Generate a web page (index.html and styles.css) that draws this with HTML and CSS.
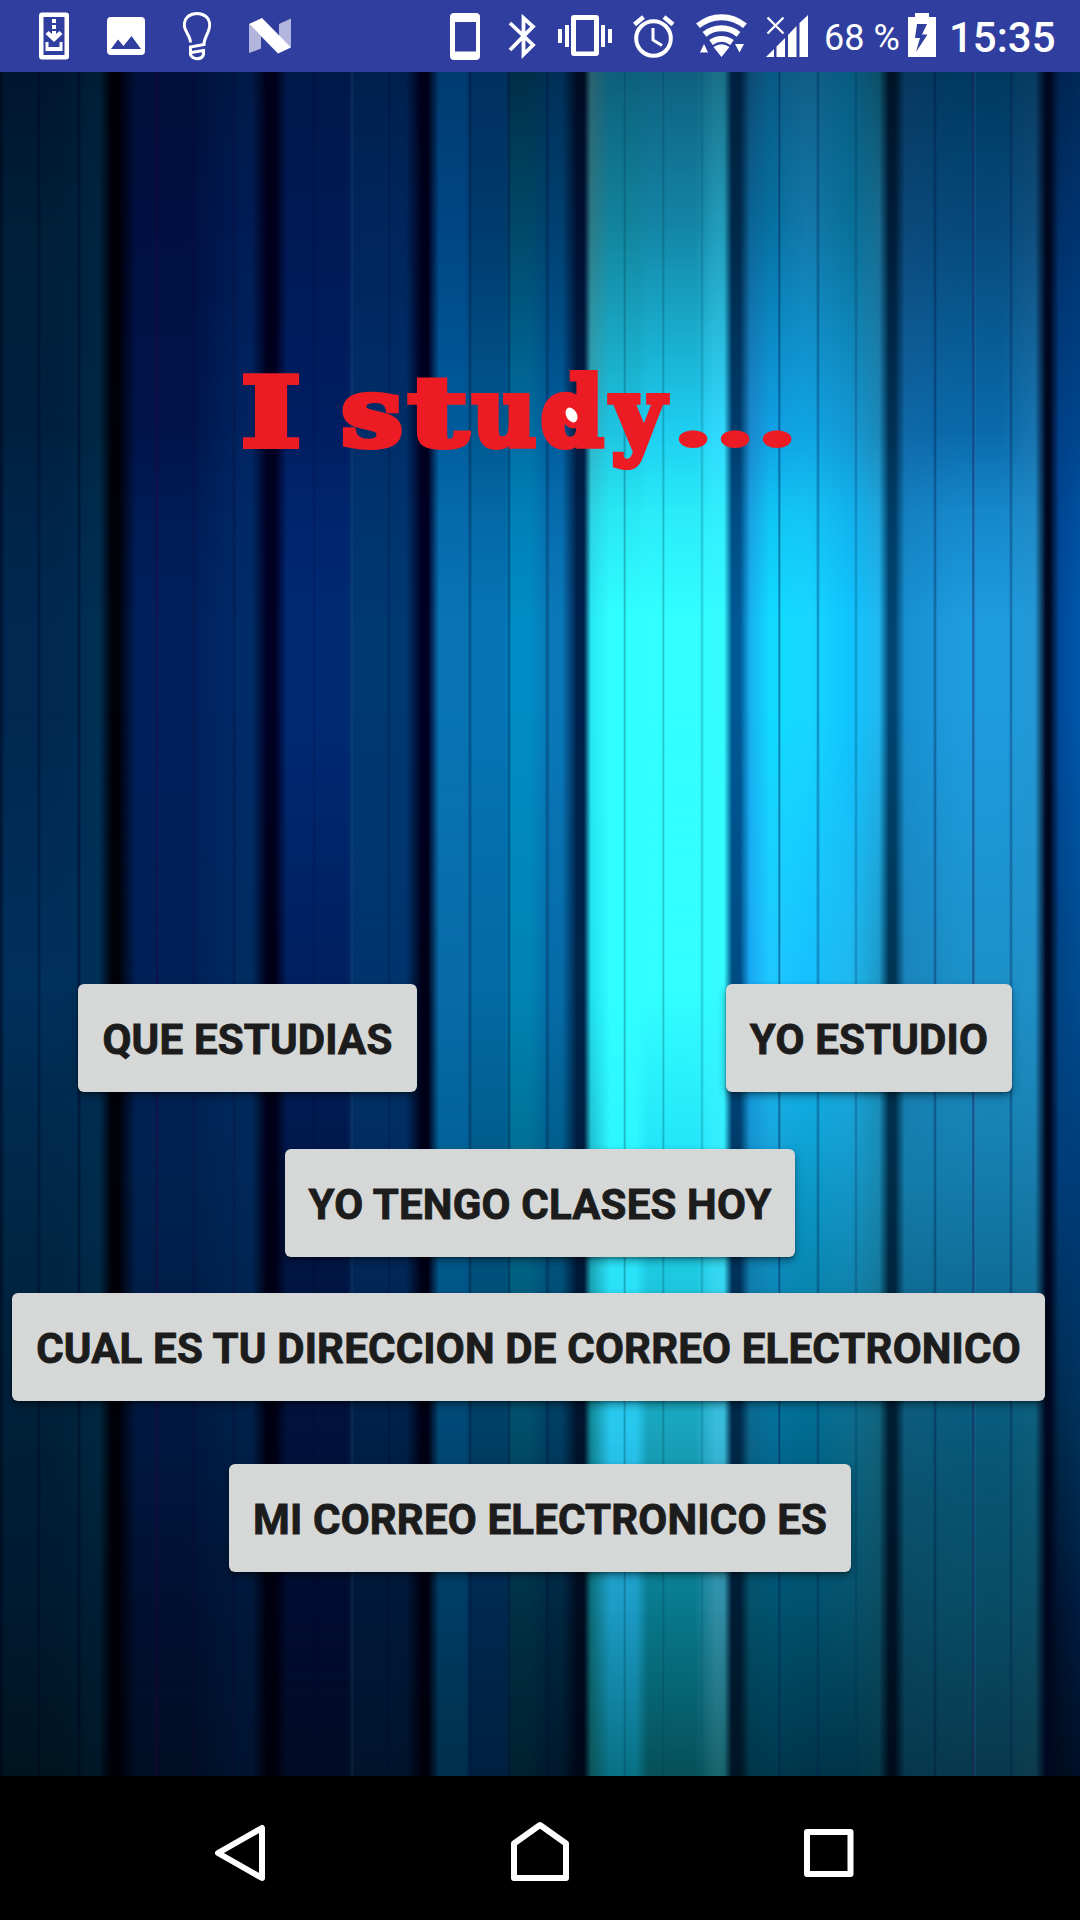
FILE: index.html
```html
<!DOCTYPE html>
<html lang="es">
<head>
<meta charset="utf-8">
<title>I study...</title>
<link rel="stylesheet" href="styles.css">
</head>
<body>
<header class="status">
  <div class="status-left">
    <svg width="30" height="72" viewBox="39 0 30 72"><path fill="#fff" fill-rule="evenodd" d="M42 12.5h24q3 0 3 3v41q0 3-3 3H42q-3 0-3-3v-41q0-3 3-3zM43.500 17v38h21V17z"/><path fill="#fff" d="M52 19h4v4h-4zM52 25h4v4h-4zM52 31h4v3h-4zM45.500 34l3-3 3.500 3h4l3.500-3 3 3-8.500 8zM45.500 42h3v5h11v-5h3v9h-17z"/></svg>
    <svg width="38" height="72" viewBox="107 0 38 72"><path fill="#fff" fill-rule="evenodd" d="M111 17h30q4 0 4 4v30q0 4-4 4h-30q-4 0-4-4V21q0-4 4-4zM111 49h30l-9.500-13-8 10-5.500-6.500z"/></svg>
    <svg width="28" height="72" viewBox="184 0 28 72"><path fill="none" stroke="#fff" stroke-width="3" d="M191.500 42.500c0-7-6.200-11-6.200-17.500 0-15.500 25.400-15.500 25.400 0 0 7.500-5.700 12-5.700 19.500l-13.500 2.500v7.500c2 5.500 11.500 5.500 13 0v-4l-12 2"/></svg>
    <svg width="42" height="72" viewBox="249 0 42 72"><path fill="#b3b6dc" d="M249 24l12 12v12.500L249 53zM279 24l12-5.500v29l-12-10z"/><path fill="#fff" d="M249 24l13-6 29 29.500-13 6z"/></svg>
  </div>
  <div class="status-right">
    <svg width="30" height="72" viewBox="450 0 30 72"><path fill="#fff" fill-rule="evenodd" d="M454 13h22q4 0 4 4v39q0 4-4 4h-22q-4 0-4-4V17q0-4 4-4zM455 22v29.500h21V22z"/></svg>
    <svg class="bt" width="28" height="72" viewBox="508 0 28 72"><path fill="none" stroke="#fff" stroke-width="3.800" d="M510 23l23 22-9.500 9.500V18l9.500 8.500-23 23.500"/></svg>
    <svg class="vibrate" width="54" height="72" viewBox="558 0 54 72"><path fill="#fff" fill-rule="evenodd" d="M574 15h22q3 0 3 3v35q0 3-3 3h-22q-3 0-3-3V18q0-3 3-3zM576 20v31.500h18V20z"/><path fill="#fff" d="M558 29h4v14h-4zM565 25h4v22h-4zM601 25h4v22h-4zM608 29h4v14h-4z"/></svg>
    <svg class="alarm" width="42" height="72" viewBox="633 0 42 72"><g fill="none" stroke="#fff"><circle cx="653.500" cy="38.500" r="17.300" stroke-width="4"/><path stroke-width="3" d="M653 28v12l9 5.500"/><path stroke-width="4.500" d="M634.500 24.500l9-7.500M664 17l9 7.500"/></g></svg>
    <svg class="wifi" width="52" height="72" viewBox="695 0 52 72"><g fill="none" stroke="#fff" stroke-width="6"><path d="M698 25.800c14-11.500 33-11.500 47 0"/><path d="M704.500 34.300c10-8 24-8 34 0"/><path d="M711 42.500c6.500-4.700 14.500-4.700 21 0"/></g><path fill="#fff" d="M721.500 57l-8-10q8-5.500 16 0zM700 52.500l4-8.500 4 8.500zM735 44h9l-4.500 8.500z"/></svg>
    <svg class="signal" width="42" height="72" viewBox="766 0 42 72"><path fill="#fff" d="M766 57l8-8v8zM776.500 46.500l8.500-8.500v19h-8.500zM788 35l8.500-9v31H788zM799.500 23l8.500-8v42h-8.500z"/><path stroke="#fff" stroke-width="2.300" d="M767.500 17.500l16 16M783.500 17.500l-16 16"/></svg>
    <span class="percent">68 %</span>
    <svg class="battery" width="28" height="72" viewBox="908 0 28 72"><path fill="#fff" fill-rule="evenodd" d="M915 13h14v4h7v40h-28V17h7zM917 24l-2 14h5l-4 14 11.500-17.500h-5.500L927 24z"/></svg>
    <time class="clock">15:35</time>
  </div>
</header>

<main class="screen">
  <div class="curtain r1"></div>
  <div class="curtain r2"></div>
  <div class="curtain r3"></div>
  <div class="curtain r4"></div>
  <div class="curtain r5"></div>
  <div class="curtain r6"></div>
  <div class="curtain r7"></div>
  <div class="curtain r8"></div>
  <div class="curtain r9"></div>
  <div class="pleats"></div>
  <h1 class="title"><span class="l-i">I</span> <span class="l-s">s</span><span class="l-t">t</span><span class="l-u">u</span><span class="l-d">d</span><span class="l-y">y</span><span class="dot">.</span><span class="dot">.</span><span class="dot">.</span></h1>
  <div class="buttons">
    <div class="pair">
      <button class="btn b1">QUE ESTUDIAS</button>
      <button class="btn b2">YO ESTUDIO</button>
    </div>
    <button class="btn b3">YO TENGO CLASES HOY</button>
    <button class="btn b4">CUAL ES TU DIRECCION DE CORREO ELECTRONICO</button>
    <button class="btn b5">MI CORREO ELECTRONICO ES</button>
  </div>
</main>

<nav class="nav">
  <svg width="50" height="144" viewBox="215 1776 50 144"><path class="line" d="M262 1828v50l-44-25z"/></svg>
  <svg class="home" width="58" height="144" viewBox="511 1776 58 144"><path class="line" d="M514 1878v-34.500l26-18.500 26 18.500v34.500z"/></svg>
  <svg width="50" height="144" viewBox="804 1776 50 144"><path class="line" d="M807 1832h43.500v42H807z"/></svg>
</nav>
</body>
</html>
```
FILE: styles.css
```css
* { box-sizing: border-box; }
body { margin: 0; width: 1080px; height: 1920px; overflow: hidden; background: #000; font-family: Roboto, sans-serif; }
svg { display: block; flex: none; }

.status { height: 72px; background: #303f9f; display: flex; justify-content: space-between; color: #fff; }
.status-left { display: flex; gap: 38px; padding-left: 39px; }
.status-right { display: flex; align-items: center; width: 630px; }
.bt { margin-left: 28px; }
.vibrate { margin-left: 22px; }
.alarm { margin-left: 21px; }
.wifi { margin-left: 20px; }
.signal { margin-left: 19px; }
.percent { width: 84px; margin-left: 16px; font-size: 36px; line-height: 72px; padding-top: 4px; white-space: nowrap; }
.clock { margin-left: 13px; font-size: 42px; font-weight: 500; line-height: 72px; padding-top: 3px; white-space: nowrap; }

.screen { position: relative; height: 1704px; overflow: hidden; background: #001030; }

/* Backdrop: each layer holds the colours of one height and fades into the next. */
.curtain, .pleats { position: absolute; inset: 0; }
.curtain {
  background: linear-gradient(90deg,
    var(--a) 0, var(--a) 60px, var(--a2) 99px, #000008 112px, #000008 118px,
    var(--b) 136px, var(--b) 190px, var(--b2) 240px, var(--b2) 252px, var(--dk) 267px, var(--dk) 275px,
    var(--c) 287px, var(--c) 347px, var(--c2) 353px, var(--c2) 406px, var(--dk) 422px, var(--dk) 428px,
    var(--d) 439px, var(--d) 465px, var(--d2) 471px, var(--d2) 505px, var(--d3) 511px, var(--d3) 530px, var(--d4) 550px, var(--d4) 562px, var(--dm) 577px, var(--dm) 584px,
    var(--e) 591px, var(--e1) 610px, var(--e1) 636px, var(--e2) 648px, var(--e2) 695px, var(--e3) 715px, var(--e3) 724px, var(--df) 732px, var(--df) 740px,
    var(--f) 750px, var(--f2) 770px, var(--f3) 807px, var(--f4) 850px, var(--f5) 879px, var(--dg) 889px, var(--dg) 895px,
    var(--g) 905px, var(--g2) 960px, var(--g2) 1000px, var(--g3) 1035px, #000820 1046px, #000820 1050px,
    var(--h) 1059px, var(--h2) 1080px);
}
.r1 { --a: #001630; --a2: #002038; --b: #00103a; --b2: #001a48; --dk: #000018; --c: #00184a; --c2: #00204e; --d: #003c70; --d2: #003060; --d3: #002f48; --d4: #003058; --dm: #000c22; --e: #2a6270; --e1: #0d607c; --e2: #0f6180; --e3: #1a7088; --df: #002040; --f: #0d4c74; --f2: #095a84; --f3: #125f86; --f4: #085c82; --f5: #0c5068; --dg: #001428; --g: #083860; --g2: #003960; --g3: #0a3c62; --h: #002450; --h2: #002a58; }
.r2 { --a: #001f38; --a2: #002440; --b: #001042; --b2: #001c54; --dk: #00001c; --c: #001a54; --c2: #00265c; --d: #004684; --d2: #003a6c; --d3: #004868; --d4: #004070; --dm: #001030; --e: #2d7a86; --e1: #12839c; --e2: #1484a4; --e3: #229ab8; --df: #002848; --f: #0c6496; --f2: #0670a0; --f3: #1478aa; --f4: #087098; --f5: #186c90; --dg: #001c38; --g: #0c4878; --g2: #06497a; --g3: #104e7c; --h: #003068; --h2: #003470; }
.r3 { --a: #00203f; --a2: #002844; --b: #00144a; --b2: #002460; --dk: #000020; --c: #001e62; --c2: #002e68; --d: #005c9c; --d2: #005890; --d3: #006ea2; --d4: #005c9c; --dm: #001c42; --e: #30b0c4; --e1: #1ec4e2; --e2: #1ecef0; --e3: #30d8fc; --df: #003c6c; --f: #1c88cc; --f2: #10a0e4; --f3: #10a4e4; --f4: #1498d4; --f5: #1c88b8; --dg: #003054; --g: #1068a8; --g2: #0a6aaa; --g3: #1874b0; --h: #004088; --h2: #00468c; }
.r4 { --a: #002850; --a2: #003054; --b: #00205c; --b2: #002c68; --dk: #000024; --c: #002a74; --c2: #003870; --d: #0874b4; --d2: #0674b4; --d3: #008cc4; --d4: #0a78b8; --dm: #00204c; --e: #28e8f4; --e1: #30ffff; --e2: #32ffff; --e3: #34fcff; --df: #005894; --f: #18b0f0; --f2: #10dcff; --f3: #18d8ff; --f4: #10c4ff; --f5: #20b8f0; --dg: #004470; --g: #1890d0; --g2: #1e9ce0; --g3: #2498d4; --h: #004898; --h2: #0058ac; }
.r5 { --a: #00305c; --a2: #003058; --b: #002058; --b2: #002c60; --dk: #000018; --c: #002060; --c2: #00346c; --d: #086ca8; --d2: #046aa4; --d3: #0084b4; --d4: #066ca8; --dm: #00244a; --e: #20e0f0; --e1: #30ffff; --e2: #32ffff; --e3: #34fcff; --df: #004c84; --f: #18a8f4; --f2: #20c8ff; --f3: #16c0ff; --f4: #20b8f0; --f5: #1c98c8; --dg: #003454; --g: #1a84bc; --g2: #1c90c8; --g3: #2090c8; --h: #004484; --h2: #004c90; }
.r6 { --a: #002848; --a2: #002c4c; --b: #002250; --b2: #002858; --dk: #000018; --c: #001848; --c2: #002c60; --d: #006096; --d2: #005a88; --d3: #006c90; --d4: #005c88; --dm: #001c3c; --e: #20b8cc; --e1: #2cf4ff; --e2: #20e0f8; --e3: #34e8ff; --df: #003864; --f: #148cc4; --f2: #149ad0; --f3: #0c9ac8; --f4: #1496c8; --f5: #1888b0; --dg: #002c48; --g: #147caa; --g2: #147cac; --g3: #187cac; --h: #003c78; --h2: #003c78; }
.r7 { --a: #002038; --a2: #002840; --b: #001840; --b2: #002048; --dk: #000014; --c: #00123c; --c2: #002048; --d: #004874; --d2: #003e64; --d3: #004c68; --d4: #003c60; --dm: #00142c; --e: #108494; --e1: #28c4ec; --e2: #18a0b8; --e3: #38b8d8; --df: #002848; --f: #0c6488; --f2: #046c94; --f3: #00688c; --f4: #0c6888; --f5: #106078; --dg: #001c30; --g: #0c5878; --g2: #085878; --g3: #0c5c78; --h: #002848; --h2: #003058; }
.r8 { --a: #001a30; --a2: #001e34; --b: #001030; --b2: #00183a; --dk: #000010; --c: #000c30; --c2: #001838; --d: #003c64; --d2: #002850; --d3: #003044; --d4: #002840; --dm: #000c20; --e: #0c6c78; --e1: #1c9ac4; --e2: #08788c; --e3: #308ca4; --df: #001c34; --f: #045068; --f2: #00526e; --f3: #00506c; --f4: #06506a; --f5: #0c4c60; --dg: #001428; --g: #0a4860; --g2: #084c64; --g3: #0c4c64; --h: #001430; --h2: #001c40; }
.r9 { --a: #001420; --a2: #001828; --b: #000e24; --b2: #001430; --dk: #00000c; --c: #000c24; --c2: #00142c; --d: #00304c; --d2: #002040; --d3: #002030; --d4: #00182c; --dm: #00081a; --e: #0c5458; --e1: #087084; --e2: #065058; --e3: #18646c; --df: #001424; --f: #003448; --f2: #00384c; --f3: #003448; --f4: #003448; --f5: #043848; --dg: #000c1c; --g: #06384c; --g2: #08384c; --g3: #0c3c4c; --h: #000c1c; --h2: #001028; }
.r2 { mask-image: linear-gradient(transparent 0, #000 150px); }
.r3 { mask-image: linear-gradient(transparent 150px, #000 358px); }
.r4 { mask-image: linear-gradient(transparent 358px, rgba(0,0,0,.6) 440px, #000 548px); }
.r5 { mask-image: linear-gradient(transparent 640px, #000 900px); }
.r6 { mask-image: linear-gradient(transparent 920px, #000 1110px); }
.r7 { mask-image: linear-gradient(transparent 1110px, #000 1370px); }
.r8 { mask-image: linear-gradient(transparent 1370px, #000 1540px); }
.r9 { mask-image: linear-gradient(transparent 1540px, #000 1704px); }

/* Thin folds, 39px apart, in front of the wide stripes. */
.pleats {
  background: linear-gradient(90deg, rgba(0,0,20,.55) 0, transparent 5px,
    transparent 37px, rgba(0,0,30,.32) 38px, rgba(0,0,30,.32) 40px, transparent 41px,
    transparent 77px, rgba(0,0,30,.38) 78px, rgba(0,0,30,.38) 80px, transparent 81px,
    transparent 155px, rgba(40,0,60,.34) 156px, rgba(40,0,60,.34) 158px, transparent 159px,
    transparent 192px, rgba(20,0,50,.25) 194px, transparent 197px,
    transparent 232px, rgba(20,0,50,.28) 234px, transparent 237px,
    transparent 312px, rgba(0,0,50,.22) 314px, transparent 316px,
    transparent 350px, rgba(80,100,150,.18) 352px, transparent 354px,
    transparent 387px, rgba(0,0,50,.24) 389px, transparent 391px,
    transparent 468px, rgba(0,10,50,.4) 470px, transparent 472px,
    transparent 507px, rgba(0,10,50,.4) 509px, transparent 511px,
    transparent 545px, rgba(0,10,50,.34) 547px, transparent 550px,
    transparent 623px, rgba(0,60,80,.42) 625px, transparent 626px,
    transparent 662px, rgba(0,60,80,.36) 663px, transparent 665px,
    transparent 700px, rgba(0,80,110,.3) 702px, transparent 704px,
    transparent 778px, rgba(0,30,80,.6) 779px, transparent 781px,
    transparent 816px, rgba(0,30,80,.42) 818px, transparent 820px,
    transparent 854px, rgba(0,40,80,.32) 856px, transparent 858px,
    transparent 933px, rgba(0,15,60,.42) 935px, transparent 937px,
    transparent 972px, rgba(30,25,90,.65) 973px, rgba(60,130,180,.18) 975px, transparent 977px,
    transparent 1009px, rgba(0,20,70,.4) 1011px, transparent 1013px);
}

.title { position: relative; display: flex; height: 120px; margin: 281px 0 0 239px; color: #ed1c24; font: bold 95px/120px "DejaVu Serif", serif; -webkit-text-stroke: 6px #ed1c24; paint-order: stroke; }
.title span { display: flex; justify-content: center; width: 64px; margin-right: 2px; transform: scaleX(var(--sx, 1)); }
.title .l-i { --sx: 1.35; margin-right: 37px; }
.title .l-s { --sx: 1.15; }
.title .l-t { --sx: 1.35; }
.title .l-u { --sx: .93; margin-right: 4px; }
.title .l-d { position: relative; --sx: .95; }
.title .l-y { --sx: .97; }
.title .l-d::after { content: ""; position: absolute; left: 26px; top: 54px; width: 11px; height: 16px; border-radius: 50%; background: #fff; box-shadow: 0 0 0 6px #ed1c24; transform: rotate(-32deg); }
.title .dot { --sx: 1.6; width: 42px; margin: 0; font-family: "Liberation Serif", serif; font-size: 98px; -webkit-text-stroke-width: 2px; }

.buttons { position: absolute; inset: 912px 0 auto; display: flex; flex-direction: column; align-items: center; }
.pair { display: flex; justify-content: space-between; align-self: stretch; padding: 0 68px 0 78px; margin-bottom: 57px; }
.btn { flex: none; height: 108px; padding: 3px 0 0; border: 0; border-radius: 6px; background: #d6d8d7; color: #1c1c1c; font: bold 42px/105px Roboto, sans-serif; letter-spacing: .18px; -webkit-text-stroke: .9px #1c1c1c; text-align: center; white-space: nowrap; box-shadow: 0 4px 8px rgba(0,0,0,.36), 0 2px 2px rgba(0,0,0,.2); }
.b1 { width: 339px; }
.b2 { width: 286px; }
.b3 { width: 510px; margin-bottom: 36px; }
.b4 { width: 1033px; margin: 0 35px 63px 12px; align-self: flex-start; }
.b5 { width: 622px; }

.nav { height: 144px; background: #000; display: flex; justify-content: space-between; padding: 0 226px 0 215px; }
.home { margin-left: 11px; }
.line { fill: none; stroke: #fff; stroke-width: 6; stroke-linejoin: round; }
```
